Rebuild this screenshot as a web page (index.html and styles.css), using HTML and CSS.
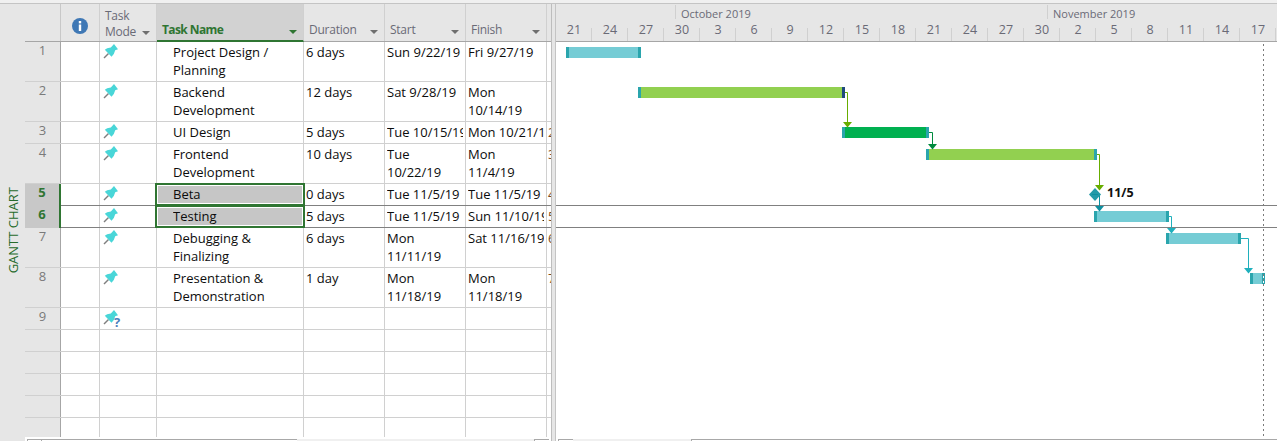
FILE: index.html
```html
<!DOCTYPE html>
<html lang="en">
<head>
<meta charset="utf-8">
<title>Gantt Chart</title>
<link rel="stylesheet" href="styles.css">
</head>
<body>
<svg class="defs" width="0" height="0" aria-hidden="true">
  <defs>
    <symbol id="pin" viewBox="0 0 16 16">
      <path d="M1 15 L5.5 10.5" stroke="#7f7f7f" stroke-width="1.4" fill="none"/>
      <path d="M11 1 L15 6.2 L12.2 7.2 L10.8 11 L8.5 13.8 L1.8 6.8 L4.2 5.2 L7.8 4.4 Z" fill="#49d6d8"/>
    </symbol>
  </defs>
</svg>
<div class="topband"></div>
<div class="panes">
  <div class="strip"><span class="strip-label">GANTT CHART</span></div>

  <div class="sheet">
    <div class="row head">
      <div class="hc num"></div>
      <div class="hc info">
        <svg width="16" height="16" viewBox="0 0 16 16"><circle cx="8" cy="8" r="8" fill="#3f78b5"/><rect x="6.8" y="3" width="2.4" height="2.4" fill="#fff"/><rect x="6.8" y="6.5" width="2.4" height="6.5" fill="#fff"/></svg>
      </div>
      <div class="hc mode"><span>Task<br>Mode</span><i class="caret"></i></div>
      <div class="hc name"><span>Task Name</span><i class="caret"></i></div>
      <div class="hc col"><span>Duration</span><i class="caret"></i></div>
      <div class="hc col"><span>Start</span><i class="caret"></i></div>
      <div class="hc col"><span>Finish</span><i class="caret"></i></div>
      <div class="hc pred"></div>
    </div>

    <div class="row tall">
      <div class="c num">1</div><div class="c info"></div>
      <div class="c mode"><svg class="pin"><use href="#pin"/></svg></div>
      <div class="c name"><span>Project Design /<br>Planning</span></div>
      <div class="c col"><span>6 days</span></div>
      <div class="c col"><span>Sun 9/22/19</span></div>
      <div class="c col"><span>Fri 9/27/19</span></div>
      <div class="c pred"></div>
    </div>
    <div class="row tall">
      <div class="c num">2</div><div class="c info"></div>
      <div class="c mode"><svg class="pin"><use href="#pin"/></svg></div>
      <div class="c name"><span>Backend<br>Development</span></div>
      <div class="c col"><span>12 days</span></div>
      <div class="c col"><span>Sat 9/28/19</span></div>
      <div class="c col"><span>Mon<br>10/14/19</span></div>
      <div class="c pred"></div>
    </div>
    <div class="row">
      <div class="c num">3</div><div class="c info"></div>
      <div class="c mode"><svg class="pin"><use href="#pin"/></svg></div>
      <div class="c name"><span>UI Design</span></div>
      <div class="c col"><span>5 days</span></div>
      <div class="c col"><span>Tue 10/15/19</span></div>
      <div class="c col"><span>Mon 10/21/19</span></div>
      <div class="c pred"><b>2</b></div>
    </div>
    <div class="row tall">
      <div class="c num">4</div><div class="c info"></div>
      <div class="c mode"><svg class="pin"><use href="#pin"/></svg></div>
      <div class="c name"><span>Frontend<br>Development</span></div>
      <div class="c col"><span>10 days</span></div>
      <div class="c col"><span>Tue<br>10/22/19</span></div>
      <div class="c col"><span>Mon<br>11/4/19</span></div>
      <div class="c pred"><b>3</b></div>
    </div>
    <div class="row picked">
      <div class="c num">5</div><div class="c info"></div>
      <div class="c mode"><svg class="pin"><use href="#pin"/></svg></div>
      <div class="c name"><span>Beta</span></div>
      <div class="c col"><span>0 days</span></div>
      <div class="c col"><span>Tue 11/5/19</span></div>
      <div class="c col"><span>Tue 11/5/19</span></div>
      <div class="c pred"><b>4</b></div>
    </div>
    <div class="row picked">
      <div class="c num">6</div><div class="c info"></div>
      <div class="c mode"><svg class="pin"><use href="#pin"/></svg></div>
      <div class="c name"><span>Testing</span></div>
      <div class="c col"><span>5 days</span></div>
      <div class="c col"><span>Tue 11/5/19</span></div>
      <div class="c col"><span>Sun 11/10/19</span></div>
      <div class="c pred"><b>5</b></div>
    </div>
    <div class="row tall">
      <div class="c num">7</div><div class="c info"></div>
      <div class="c mode"><svg class="pin"><use href="#pin"/></svg></div>
      <div class="c name"><span>Debugging &amp;<br>Finalizing</span></div>
      <div class="c col"><span>6 days</span></div>
      <div class="c col"><span>Mon<br>11/11/19</span></div>
      <div class="c col"><span>Sat 11/16/19</span></div>
      <div class="c pred"><b>6</b></div>
    </div>
    <div class="row tall">
      <div class="c num">8</div><div class="c info"></div>
      <div class="c mode"><svg class="pin"><use href="#pin"/></svg></div>
      <div class="c name"><span>Presentation &amp;<br>Demonstration</span></div>
      <div class="c col"><span>1 day</span></div>
      <div class="c col"><span>Mon<br>11/18/19</span></div>
      <div class="c col"><span>Mon<br>11/18/19</span></div>
      <div class="c pred"><b>7</b></div>
    </div>
    <div class="row">
      <div class="c num">9</div><div class="c info"></div>
      <div class="c mode unknown"><svg class="pin"><use href="#pin"/></svg><em>?</em></div>
      <div class="c name"></div><div class="c col"></div><div class="c col"></div><div class="c col"></div><div class="c pred"></div>
    </div>
    <div class="row"><div class="c num"></div><div class="c info"></div><div class="c mode"></div><div class="c name"></div><div class="c col"></div><div class="c col"></div><div class="c col"></div><div class="c pred"></div></div>
    <div class="row"><div class="c num"></div><div class="c info"></div><div class="c mode"></div><div class="c name"></div><div class="c col"></div><div class="c col"></div><div class="c col"></div><div class="c pred"></div></div>
    <div class="row"><div class="c num"></div><div class="c info"></div><div class="c mode"></div><div class="c name"></div><div class="c col"></div><div class="c col"></div><div class="c col"></div><div class="c pred"></div></div>
    <div class="row"><div class="c num"></div><div class="c info"></div><div class="c mode"></div><div class="c name"></div><div class="c col"></div><div class="c col"></div><div class="c col"></div><div class="c pred"></div></div>
    <div class="row last"><div class="c num"></div><div class="c info"></div><div class="c mode"></div><div class="c name"></div><div class="c col"></div><div class="c col"></div><div class="c col"></div><div class="c pred"></div></div>

    <div class="hscroll">
      <div class="sb-btn w14"></div><div class="sb-thumb w256"></div><div class="sb-track w237"></div><div class="sb-btn w15"></div>
    </div>
  </div>

  <div class="sash"></div>

  <div class="chart">
    <div class="scale">
      <div class="months">
        <div class="month sep"></div>
        <div class="month oct">October 2019</div>
        <div class="month nov">November 2019</div>
      </div>
      <div class="days">
        <div class="day">21</div><div class="day">24</div><div class="day">27</div><div class="day">30</div>
        <div class="day">3</div><div class="day">6</div><div class="day">9</div><div class="day">12</div>
        <div class="day">15</div><div class="day">18</div><div class="day">21</div><div class="day">24</div>
        <div class="day">27</div><div class="day">30</div><div class="day">2</div><div class="day">5</div>
        <div class="day">8</div><div class="day">11</div><div class="day">14</div><div class="day">17</div>
      </div>
    </div>
    <svg class="plot" width="721" height="395" viewBox="556 42 721 395">
      <line class="pick-line" x1="556" x2="1277" y1="205.5" y2="205.5"/>
      <line class="pick-line" x1="556" x2="1277" y1="227.5" y2="227.5"/>
      <line class="today" x1="1263.5" x2="1263.5" y1="44" y2="437"/>

      <g class="crisp">
        <rect class="teal" x="566" y="47" width="75" height="11"/>
        <rect class="cap" x="566" y="47" width="3" height="11"/>
        <rect class="cap" x="638" y="47" width="3" height="11"/>

        <rect class="lime" x="638" y="87" width="207" height="11"/>
        <rect class="cap" x="638" y="87" width="3" height="11"/>
        <rect class="navy" x="842" y="87" width="3" height="11"/>

        <rect class="emerald" x="842" y="127" width="87" height="11"/>
        <rect class="cap" x="842" y="127" width="3" height="11"/>
        <rect class="cap" x="926" y="127" width="3" height="11"/>

        <rect class="lime" x="926" y="149" width="171" height="11"/>
        <rect class="cap" x="926" y="149" width="3" height="11"/>
        <rect class="cap" x="1094" y="149" width="3" height="11"/>

        <rect class="teal" x="1094" y="211" width="75" height="11"/>
        <rect class="cap" x="1094" y="211" width="3" height="11"/>
        <rect class="cap" x="1166" y="211" width="3" height="11"/>

        <rect class="teal" x="1166" y="233" width="75" height="11"/>
        <rect class="cap" x="1166" y="233" width="3" height="11"/>
        <rect class="cap" x="1238" y="233" width="3" height="11"/>

        <rect class="teal" x="1250" y="273" width="12" height="11"/>
        <rect class="cap" x="1250" y="273" width="3" height="11"/>
        <path class="open-end" d="M1262 273.5H1264.5V283.5H1262M1262.5 273V284M1262 278.5H1264.5"/>
      </g>

      <path class="link l-green" d="M845 92.5H847.5V122"/>
      <polygon class="f-green" points="843,122 852,122 847.5,127.5"/>
      <path class="link l-dgreen" d="M929 132.5H932.5V144"/>
      <polygon class="f-dgreen" points="928,144 937,144 932.5,149.5"/>
      <path class="link l-green" d="M1097 154.5H1099.5V185"/>
      <polygon class="f-green" points="1095,185 1104,185 1099.5,190.5"/>

      <path class="link l-dteal" d="M1095 194.5H1099.5V206"/>
      <polygon class="f-dteal" points="1095,206 1104,206 1099.5,211.5"/>
      <polygon class="f-diamond" points="1095,188 1101,194.5 1095,201 1089,194.5"/>
      <path class="link l-dteal" d="M1092 194.5H1098"/>
      <text class="stamp" x="1107" y="197">11/5</text>

      <path class="link l-teal" d="M1169 216.5H1171.5V228"/>
      <polygon class="f-teal" points="1167,228 1176,228 1171.5,233.5"/>
      <path class="link l-teal" d="M1241 238.5H1248.5V268"/>
      <polygon class="f-teal" points="1244,268 1253,268 1248.5,273.5"/>
    </svg>
    <div class="hscroll">
      <div class="sb-btn w15"></div><div class="sb-track w118"></div><div class="sb-thumb grow"></div>
    </div>
  </div>
</div>
</body>
</html>
```

FILE: styles.css
```css
* { box-sizing: border-box; }

html, body {
  margin: 0;
  padding: 0;
  width: 1277px;
  height: 441px;
  overflow: hidden;
  background: #fff;
  font-family: "Open Sans", "Noto Sans", sans-serif;
  font-size: 13px;
  color: #0c0c0c;
}

.defs { position: absolute; }

.topband {
  height: 4px;
  background: #f0f0f0;
  border-bottom: 1px solid #c4c4c4;
}

.panes {
  display: flex;
  height: 437px;
}

/* left view bar */
.strip {
  width: 25px;
  flex: none;
  background: #e6e6e6;
  display: flex;
  align-items: center;
  justify-content: center;
  padding-top: 15px;
}

.strip-label {
  writing-mode: vertical-rl;
  transform: rotate(180deg);
  color: #276b2b;
  font-size: 13px;
  white-space: nowrap;
}

/* task sheet */
.sheet {
  width: 526px;
  flex: none;
  display: flex;
  flex-direction: column;
}

.row {
  display: flex;
  height: 22px;
  flex: none;
  border-bottom: 1px solid #d0d0d0;
}

.row.tall { height: 40px; }
.row.last { height: 19px; border-bottom: 0; }
.row.picked { border-bottom-color: #808080; }

.row.head {
  height: 38px;
  background: #e6e6e6;
  border-bottom-color: #a6a6a6;
  color: #6a6a76;
  font-size: 12px;
  letter-spacing: -0.25px;
}

.c, .hc {
  flex: none;
  border-right: 1px solid #d0d0d0;
}

.num  { width: 36px; }
.info { width: 39px; }
.mode { width: 57px; }
.name { width: 147px; }
.col  { width: 81px; }
.pred { width: 4px; border-right: 0; overflow: hidden; }

.c { line-height: 18px; padding: 1px 2px 0; }
.c > span { display: block; overflow: hidden; white-space: nowrap; }

.c.num {
  background: #e6e6e6;
  border-right-color: #a6a6a6;
  color: #7a7a7a;
  text-align: center;
  line-height: 17px;
  padding: 0;
}

.c.name { padding-left: 16px; }
.c.mode { padding: 1px 0 0 3px; }
.c.pred { padding: 1px 0 0 1px; }
.c.pred b { font-weight: 400; color: #7a4a20; }

.pin { display: block; width: 16px; height: 16px; }

.unknown { display: flex; }
.unknown em {
  font-style: normal;
  font-weight: 700;
  color: #4a7ebb;
  margin-left: -5px;
  font-size: 13px;
  line-height: 26px;
}

.hc.num { border-right-color: #c8c8c8; }
.hc.info { display: flex; justify-content: center; padding-top: 14px; }

.hc.mode, .hc.name, .hc.col {
  display: flex;
  justify-content: space-between;
  align-items: flex-end;
  padding: 0 6px 2px 5px;
  line-height: 18px;
}

.hc.mode { line-height: 16px; padding-bottom: 1px; }

.caret {
  width: 0;
  height: 0;
  margin-bottom: 5px;
  border-left: 4px solid transparent;
  border-right: 4px solid transparent;
  border-top: 4px solid #6f6f6f;
}

.hc.name {
  background: #d2d2d2;
  color: #2f7532;
  font-weight: 700;
  letter-spacing: -0.6px;
  margin-bottom: -1px;
  border-bottom: 2px solid #2f7532;
  padding-bottom: 1px;
}
.hc.name .caret { border-top-color: #2f7532; }

/* selected rows */
.picked .c.num {
  background: #c8c8c8;
  color: #2f7532;
  font-weight: 700;
  border-right: 2px solid #2f7532;
  margin-bottom: -1px;
}

.picked .c.name { position: relative; }

.picked .c.name::before {
  content: "";
  position: absolute;
  inset: -1px -2px -1px -2px;
  background: #c6c6c6;
  border: 2px solid #2f7532;
  box-shadow: inset 0 0 0 1px #fff;
}

.picked .c.name > span { position: relative; }

/* splitter */
.sash {
  width: 5px;
  flex: none;
  background: #e6e6e6;
  border-left: 1px solid #bdbdbd;
  border-right: 1px solid #c4c4c4;
}

/* chart */
.chart {
  width: 721px;
  flex: none;
  display: flex;
  flex-direction: column;
}

.scale {
  height: 38px;
  flex: none;
  background: #e6e6e6;
  border-bottom: 1px solid #a6a6a6;
  color: #6a6a76;
}

.months { display: flex; height: 15px; line-height: 20px; font-size: 11px; }
.month.sep { width: 119px; }
.month.oct, .month.nov {
  padding-left: 6px;
  background: linear-gradient(#d0d0d0, #d0d0d0) left 0 top 1px / 1px 15px no-repeat;
}
.month.oct { width: 372px; }
.month.nov { flex: 1; }

.days { display: flex; height: 22px; }
.day {
  width: 36px;
  flex: none;
  text-align: center;
  font-size: 12.5px;
  line-height: 22px;
  background: linear-gradient(#d0d0d0, #d0d0d0) right bottom / 1px 13px no-repeat;
}

.plot { display: block; flex: none; }

.pick-line { stroke: #808080; stroke-width: 1; }
.today { stroke: #7a7a7a; stroke-width: 1; stroke-dasharray: 2 3; }
.crisp { shape-rendering: crispEdges; }

.teal { fill: #75ccd5; }
.lime { fill: #92d050; }
.emerald { fill: #00b050; }
.cap { fill: #2aa5ad; }
.navy { fill: #1f497d; }
.open-end { fill: none; stroke: #2aa5ad; stroke-width: 1; }

.link { fill: none; stroke-width: 1; }
.l-green { stroke: #67ad00; }
.l-dgreen { stroke: #008a3e; }
.l-teal { stroke: #1fb0bd; }
.l-dteal { stroke: #0f8fa0; }
.f-green { fill: #67ad00; }
.f-dgreen { fill: #008a3e; }
.f-teal { fill: #1fb0bd; }
.f-dteal { fill: #0f8fa0; }
.f-diamond { fill: #239aa8; }

.stamp { font-size: 12.5px; font-weight: 700; fill: #111; }

/* scrollbars */
.hscroll {
  height: 4px;
  flex: none;
  display: flex;
  padding: 2px 0 0 2px;
  background: #fff;
}

.hscroll > div { height: 2px; flex: none; }
.sb-btn, .sb-thumb { border-top: 1px solid #a8a8a8; border-left: 1px solid #a8a8a8; }
.sb-track { background: #f0f0f0; }
.sb-thumb.grow { flex: 1; }
.w14 { width: 14px; }
.w15 { width: 15px; }
.w118 { width: 118px; }
.w237 { width: 237px; }
.w256 { width: 256px; }
```
